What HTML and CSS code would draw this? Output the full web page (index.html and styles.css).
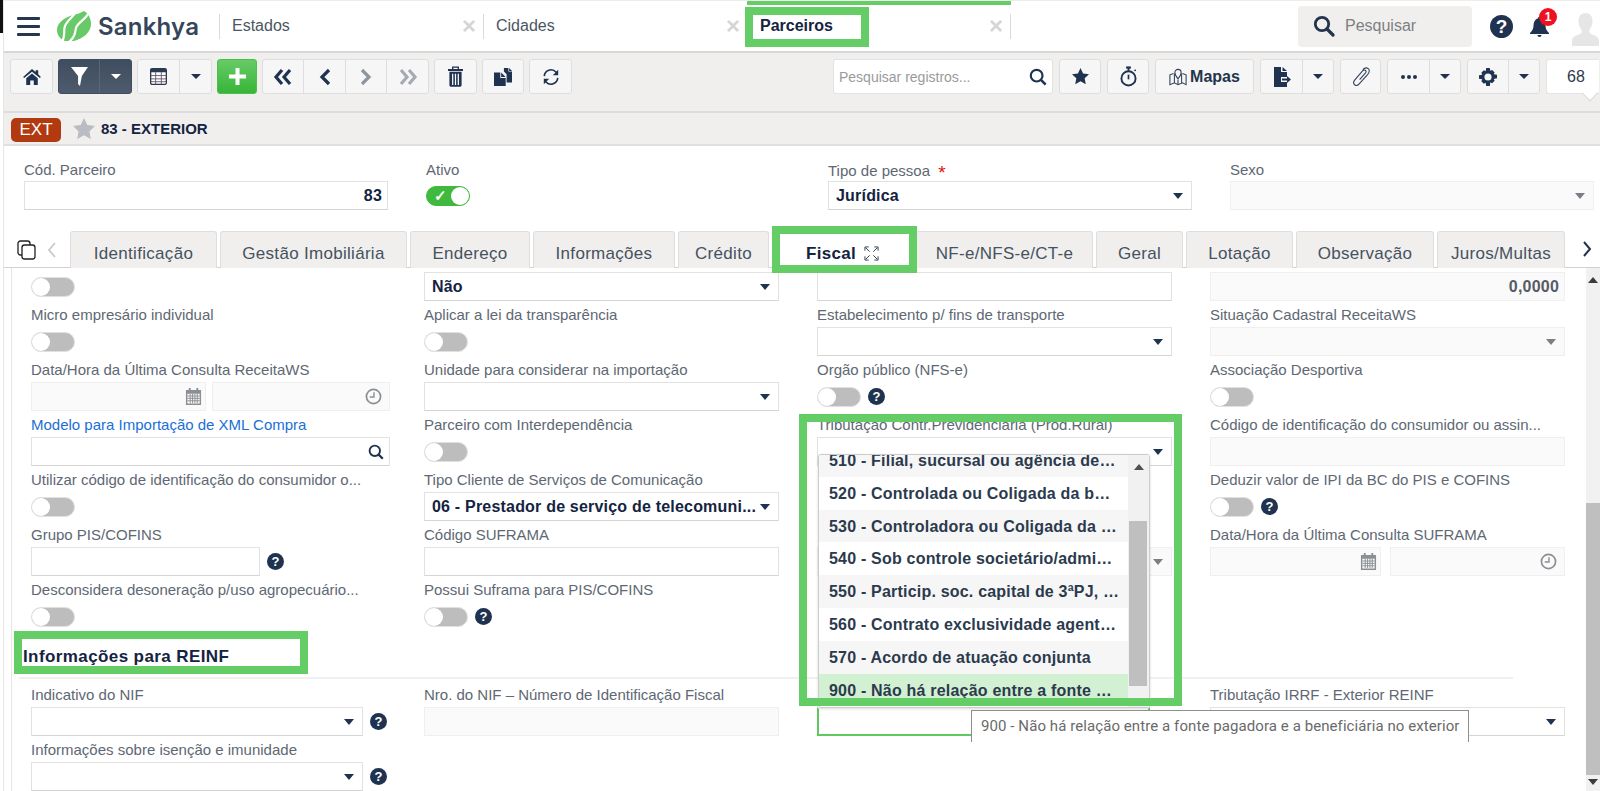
FILE: index.html
```html
<!DOCTYPE html>
<html lang="pt-BR">
<head>
<meta charset="utf-8">
<title>Sankhya - Parceiros</title>
<link rel="stylesheet" href="styles.css">
</head>
<body>
<div class="page">
  <header class="topbar">
    <button class="burger" aria-label="Menu"><i></i><i></i><i></i></button>
    <div class="logo">
      <svg class="logo-mark" viewBox="0 0 35 30" width="35" height="30"><path fill="#68c968" d="M28 0c5 3 7 8 7 13 0 8-7 14-17 17H9C4 28 1 24 1 19 1 11 10 6 17 4c4-1 8-2 11-4z"/><path fill="none" stroke="#fff" stroke-width="2.200" d="M20 1C16 7 11 10 9 15c-2 5 1 9-3 16"/><path fill="none" stroke="#fff" stroke-width="2.200" d="M32 3c-3 6-10 8-12 14-1 5-1 9-7 14"/></svg>
      <span class="logo-text">Sankhya</span>
    </div>
    <div class="tab-top"><div class="tab-in"><span>Estados</span><b class="x">×</b></div></div>
    <div class="tab-top"><div class="tab-in"><span>Cidades</span><b class="x">×</b></div></div>
    <div class="tab-top active"><div class="tab-in"><span>Parceiros</span><b class="x">×</b></div></div>
    <div class="top-right">
      <div class="global-search">
        <svg viewBox="0 0 22 22" width="22" height="22"><circle cx="9" cy="9" r="6.700" fill="none" stroke="#24344d" stroke-width="2.800"/><path d="M14 14l6 6" stroke="#24344d" stroke-width="3.200" stroke-linecap="round"/></svg>
        <span>Pesquisar</span>
      </div>
      <span class="top-help">?</span>
      <div class="bell">
        <svg viewBox="0 0 19 20" width="19" height="20"><path fill="#1f3350" d="M9.500 0c1 0 1.500.5 1.500 1.300C14 2.200 15.500 5 15.500 8.500c0 3 1 5 3.500 7.500v1H0v-1c2.500-2.500 3.500-4.500 3.500-7.500C3.500 5 5 2.200 8 1.300 8 .5 8.500 0 9.500 0zM7.500 18h4c0 1.200-.8 2-2 2s-2-.8-2-2z"/></svg>
        <span class="badge">1</span>
      </div>
      <svg class="avatar" viewBox="0 0 27 33" width="27" height="33"><path fill="#e6e6e6" d="M13.500 0c4.500 0 7 3.500 7 8 0 3.500-1 6.500-3 8.500V20c3 2 9 3 9.500 7v6H0v-6c.5-4 6.500-5 9.500-7v-3.500c-2-2-3-5-3-8.500 0-4.500 2.500-8 7-8z"/></svg>
    </div>
  </header>

  <nav class="toolbar">
    <div class="tool w43"><svg viewBox="0 0 20 18" width="18" height="16"><path fill="#1f3350" d="M10 0l4 3.500V1.500h3V6l3 3-1.200 1.200L10 3 1.200 10.200 0 9zM3.500 10.500L10 5l6.500 5.500V18h-4.500v-5H8v5H3.500z"/></svg></div>
    <div class="tool dark w74"><span class="seg s41"><svg viewBox="0 0 18 20" width="17" height="19"><path fill="#fff" d="M0 0h18l-6.500 9.500L9.500 20 7.500 18V9.500z"/></svg></span><span class="seg grow"><i class="caret white"></i></span></div>
    <div class="tool w75"><span class="seg s42"><svg viewBox="0 0 18 18" width="17" height="17"><rect x=".7" y=".7" width="16.600" height="16.600" rx="1.500" fill="#fff" stroke="#2a3a50" stroke-width="1.400"/><rect x="1" y="1" width="16" height="3.500" fill="#2a3a50"/><path d="M1 8h16M1 11.500h16M1 14.500h16M6 4v13M12 4v13" stroke="#6a5a6a" stroke-width="1"/></svg></span><span class="seg grow"><i class="caret"></i></span></div>
    <div class="tool green w40"><svg viewBox="0 0 20 20" width="19" height="19"><path d="M10 1v18M1 10h18" stroke="#fff" stroke-width="4.200"/></svg></div>
    <div class="tool w167">
      <span class="seg s41"><svg viewBox="0 0 20 18" width="20" height="18"><path d="M9 2L3 9l6 7M17 2l-6 7 6 7" fill="none" stroke="#1f3350" stroke-width="3.200"/></svg></span>
      <span class="seg s42"><svg viewBox="0 0 12 18" width="12" height="18"><path d="M10 2L3 9l7 7" fill="none" stroke="#1f3350" stroke-width="3.200"/></svg></span>
      <span class="seg s41"><svg viewBox="0 0 12 18" width="12" height="18"><path d="M2 2l7 7-7 7" fill="none" stroke="#8d959f" stroke-width="3.200"/></svg></span>
      <span class="seg grow"><svg viewBox="0 0 20 18" width="20" height="18"><path d="M3 2l6 7-6 7M11 2l6 7-6 7" fill="none" stroke="#a5abb3" stroke-width="3.200"/></svg></span>
    </div>
    <div class="tool w43"><svg viewBox="0 0 16 22" width="15" height="21"><path fill="none" stroke="#1f3350" stroke-width="1.400" d="M5 3.500V1h6v2.500"/><path fill="#1f3350" d="M0 3h16v2H0zM1.500 6h13v14c0 1-.8 2-2 2h-9c-1.200 0-2-1-2-2z"/><path stroke="#fff" stroke-width="1.300" d="M5 8v12M8 8v12M11 8v12"/></svg></div>
    <div class="tool w42"><svg viewBox="0 0 20 20" width="18" height="18"><path fill="#1f3350" d="M11 0h5v4h4v12h-6V7l-3-3z"/><path fill="#1f3350" d="M16.800 0L20 3.200h-3.200z"/><path fill="#1f3350" d="M0 5h7v6h6v9H0z"/><path fill="#1f3350" d="M8 5l5 5H8z"/></svg></div>
    <div class="tool w43"><svg viewBox="0 0 20 20" width="18" height="18"><path d="M2.500 9a7.500 7.500 0 0 1 13-4.500l1 1.200M17.500 11a7.500 7.500 0 0 1-13 4.500l-1-1.200" fill="none" stroke="#1f3350" stroke-width="1.800"/><path fill="#1f3350" d="M18 2v6h-6zM2 18v-6h6z"/></svg></div>

    <div class="tool-right">
      <div class="record-search"><span>Pesquisar registros...</span><svg viewBox="0 0 20 20" width="18" height="18"><circle cx="8.500" cy="8.500" r="6.500" fill="none" stroke="#1f3350" stroke-width="2.400"/><path d="M13 13l5.500 5.500" stroke="#1f3350" stroke-width="2.800"/></svg></div>
      <div class="tool w42"><svg viewBox="0 0 20 20" width="17" height="17"><path fill="#1f3350" d="M10 0l3 6.500 7 .9-5.100 4.800L16.200 19 10 15.600 3.800 19l1.300-6.800L0 7.400l7-.9z"/></svg></div>
      <div class="tool w42"><svg viewBox="0 0 18 22" width="17" height="21"><circle cx="9" cy="13" r="7.500" fill="none" stroke="#1f3350" stroke-width="2"/><path d="M9 9v5" stroke="#1f3350" stroke-width="1.800"/><path d="M6.500 1.500h5" stroke="#1f3350" stroke-width="2.400"/><path d="M9 2v3" stroke="#1f3350" stroke-width="2"/><circle cx="16" cy="4.500" r="1" fill="#1f3350"/></svg></div>
      <div class="tool w99 mapas"><svg viewBox="0 0 20 20" width="18" height="18"><path d="M5 6L1 7.500v11l5-2 4 2 5-2 4 2v-11L15 6M6 6.500v10M14 6.500v10M10 13v5.500" fill="none" stroke="#33435a" stroke-width="1.200"/><path d="M10 12C7.500 9 6.500 7.500 6.500 5a3.500 3.500 0 0 1 7 0c0 2.500-1 4-3.500 7z" fill="none" stroke="#33435a" stroke-width="1.200"/></svg><span>Mapas</span></div>
      <div class="tool w74"><span class="seg s42"><svg viewBox="0 0 18 20" width="18" height="20"><path fill="#1f3350" d="M1 0h7v5h6v5H8v5h6v5H1z"/><path fill="#1f3350" d="M9.500 0L14 4H9.500z"/><path fill="#1f3350" d="M9 11.500h5V9l4 3.500-4 3.500v-2.500H9z"/></svg></span><span class="seg grow"><i class="caret"></i></span></div>
      <div class="tool w41"><svg viewBox="0 0 22 22" width="20" height="20"><path d="M9.500 14L16 6.500C17 5.200 16.500 4 15.500 3.500 14.500 3 13.500 3.300 12.500 4.500L4 14.500c-1.500 2-1.300 4 0 5 1.500 1.200 3.500.8 5-1L18.500 8C20.500 5.500 20.500 3 19 1.800 17.300.5 15 .8 13 3" fill="none" stroke="#33435a" stroke-width="1.200"/></svg></div>
      <div class="tool w74"><span class="seg s42"><svg viewBox="0 0 16 4" width="16" height="4"><circle cx="2" cy="2" r="2" fill="#1f3350"/><circle cx="8" cy="2" r="2" fill="#1f3350"/><circle cx="14" cy="2" r="2" fill="#1f3350"/></svg></span><span class="seg grow"><i class="caret"></i></span></div>
      <div class="tool w73"><span class="seg s41"><svg viewBox="0 0 20 20" width="18" height="18"><path fill="#1f3350" d="M8 0h4l.6 3 2-.9 2.800 2.800-1 2 3.600.6v4l-3.600.6 1 2-2.800 2.800-2-1L12 20H8l-.6-3.600-2 1-2.800-2.800 1-2L0 12V8l3.600-.6-1-2 2.800-2.800 2 1z"/><circle cx="10" cy="10" r="4" fill="#f6f6f6"/></svg></span><span class="seg grow"><i class="caret"></i></span></div>
      <div class="count">68</div>
    </div>
  </nav>

  <div class="recordbar">
    <span class="ext">EXT</span>
    <svg class="rec-star" viewBox="0 0 22 22" width="22" height="22"><path fill="#b9bcc2" d="M11 0l3.300 7.100 7.700 1-5.600 5.300 1.400 7.600L11 17.300 4.200 21l1.400-7.600L0 8.100l7.700-1z"/></svg>
    <span class="rec-title">83 - EXTERIOR</span>
  </div>

  <section class="head-form">
    <div class="hf"><label>Cód. Parceiro</label><div class="ctl right strong">83</div></div>
    <div class="hf"><label>Ativo</label><div class="switch on"><span class="check">✓</span><i></i></div></div>
    <div class="hf"><label>Tipo de pessoa <em>*</em></label><div class="ctl sel strong">Jurídica</div></div>
    <div class="hf"><label>Sexo</label><div class="ctl sel off"></div></div>
  </section>

  <div class="tabs">
    <svg class="copy-ic" viewBox="0 0 20 20" width="20" height="20"><rect x="1" y="1" width="12" height="14" rx="2.500" fill="none" stroke="#222" stroke-width="1.300"/><rect x="5" y="5" width="13" height="14" rx="2.500" fill="#fff" stroke="#222" stroke-width="1.300"/></svg>
    <svg class="chev-l" viewBox="0 0 10 18" width="10" height="18"><path d="M8 2L2 9l6 7" fill="none" stroke="#c9c9c9" stroke-width="1.800"/></svg>
    <div class="tab t147">Identificação</div>
    <div class="tab t187">Gestão Imobiliária</div>
    <div class="tab t120">Endereço</div>
    <div class="tab t142">Informações</div>
    <div class="tab t91">Crédito</div>
    <div class="tab t141 current">Fiscal<svg viewBox="0 0 16 16" width="15" height="15"><path d="M1 5V1h4M11 1h4v4M1 11v4h4M15 11v4h-4M2 2l4 4M14 2l-4 4M2 14l4-4M14 14l-4-4" fill="none" stroke="#2a3a50" stroke-width="1"/></svg></div>
    <div class="tab t177">NF-e/NFS-e/CT-e</div>
    <div class="tab t87">Geral</div>
    <div class="tab t107">Lotação</div>
    <div class="tab t138">Observação</div>
    <div class="tab t128">Juros/Multas</div>
    <svg class="chev-r" viewBox="0 0 10 18" width="10" height="18"><path d="M2 2l6 7-6 7" fill="none" stroke="#1f3350" stroke-width="2"/></svg>
  </div>

  <div class="content">
    <main class="pane">
      <div class="grid first">
        <div class="f c1 nolabel"><div class="switch"><i></i></div></div>
        <div class="f nolabel"><div class="ctl sel strong">Não</div></div>
        <div class="f nolabel"><div class="ctl"></div></div>
        <div class="f c4 nolabel"><div class="ctl off right strong grey">0,0000</div></div>

        <div class="f c1"><label>Micro empresário individual</label><div class="switch"><i></i></div></div>
        <div class="f"><label>Aplicar a lei da transparência</label><div class="switch"><i></i></div></div>
        <div class="f"><label>Estabelecimento p/ fins de transporte</label><div class="ctl sel"></div></div>
        <div class="f c4"><label>Situação Cadastral ReceitaWS</label><div class="ctl sel off"></div></div>

        <div class="f c1"><label>Data/Hora da Última Consulta ReceitaWS</label>
          <div class="pair">
            <div class="ctl off ic"><svg viewBox="0 0 18 18" width="17" height="17"><use href="#cal"/></svg></div>
            <div class="ctl off ic"><svg viewBox="0 0 18 18" width="17" height="17"><use href="#clk"/></svg></div>
          </div>
        </div>
        <div class="f"><label>Unidade para considerar na importação</label><div class="ctl sel"></div></div>
        <div class="f"><label>Orgão público (NFS-e)</label><div class="inline"><div class="switch"><i></i></div><span class="help">?</span></div></div>
        <div class="f c4"><label>Associação Desportiva</label><div class="switch"><i></i></div></div>

        <div class="f c1"><label class="link">Modelo para Importação de XML Compra</label><div class="ctl ic"><svg viewBox="0 0 20 20" width="16" height="16"><circle cx="8.500" cy="8.500" r="6.500" fill="none" stroke="#1f3350" stroke-width="2.400"/><path d="M13 13l5.500 5.500" stroke="#1f3350" stroke-width="2.800"/></svg></div></div>
        <div class="f"><label>Parceiro com Interdependência</label><div class="switch"><i></i></div></div>
        <div class="f"><label>Tributação Contr.Previdenciária (Prod.Rural)</label><div class="ctl sel"></div></div>
        <div class="f c4"><label>Código de identificação do consumidor ou assin...</label><div class="ctl off"></div></div>

        <div class="f c1"><label>Utilizar código de identificação do consumidor o...</label><div class="switch"><i></i></div></div>
        <div class="f"><label>Tipo Cliente de Serviços de Comunicação</label><div class="ctl sel strong">06 - Prestador de serviço de telecomuni...</div></div>
        <div class="f"></div>
        <div class="f c4"><label>Deduzir valor de IPI da BC do PIS e COFINS</label><div class="inline"><div class="switch"><i></i></div><span class="help">?</span></div></div>

        <div class="f c1"><label>Grupo PIS/COFINS</label><div class="inline"><div class="ctl narrow"></div><span class="help">?</span></div></div>
        <div class="f"><label>Código SUFRAMA</label><div class="ctl"></div></div>
        <div class="f"><div class="spacer"></div><div class="ctl sel off"></div></div>
        <div class="f c4"><label>Data/Hora da Última Consulta SUFRAMA</label>
          <div class="pair">
            <div class="ctl off ic"><svg viewBox="0 0 18 18" width="17" height="17"><use href="#cal"/></svg></div>
            <div class="ctl off ic"><svg viewBox="0 0 18 18" width="17" height="17"><use href="#clk"/></svg></div>
          </div>
        </div>

        <div class="f c1"><label>Desconsidera desoneração p/uso agropecuário...</label><div class="switch"><i></i></div></div>
        <div class="f"><label>Possui Suframa para PIS/COFINS</label><div class="inline"><div class="switch"><i></i></div><span class="help">?</span></div></div>
      </div>

      <h2 class="section">Informações para REINF</h2>

      <div class="grid">
        <div class="f c1"><label>Indicativo do NIF</label><div class="inline"><div class="ctl sel mid"></div><span class="help">?</span></div></div>
        <div class="f"><label>Nro. do NIF – Número de Identificação Fiscal</label><div class="ctl off"></div></div>
        <div class="f"><div class="spacer"></div><div class="ctl focus"></div></div>
        <div class="f c4"><label>Tributação IRRF - Exterior REINF</label><div class="ctl sel"></div></div>
        <div class="f c1"><label>Informações sobre isenção e imunidade</label><div class="inline"><div class="ctl sel mid"></div><span class="help">?</span></div></div>
      </div>
    </main>
    <aside class="scroll">
      <i class="arrow up"></i>
      <div class="track"><div class="thumb"></div></div>
      <i class="arrow down"></i>
    </aside>
  </div>

  <ul class="dropdown">
    <li class="clipped">510 - Filial, sucursal ou agência de…</li>
    <li>520 - Controlada ou Coligada da b…</li>
    <li>530 - Controladora ou Coligada da …</li>
    <li>540 - Sob controle societário/admi…</li>
    <li>550 - Particip. soc. capital de 3ªPJ, …</li>
    <li>560 - Contrato exclusividade agent…</li>
    <li>570 - Acordo de atuação conjunta</li>
    <li class="picked">900 - Não há relação entre a fonte …</li>
  </ul>
  <div class="dd-scroll"><i class="arrow up"></i><div class="dd-track"><div class="dd-thumb"></div></div><i class="arrow down soft"></i></div>
  <div class="tooltip">900 - Não há relação entre a fonte pagadora e a beneficiária no exterior</div>

  <div class="mark m-parceiros"></div>
  <div class="mark m-fiscal"></div>
  <div class="mark m-reinf"></div>
  <div class="mark m-drop"></div>
  <div class="edge"></div>

  <svg class="defs" width="0" height="0">
    <defs>
      <g id="cal"><path fill="#8b8f94" d="M1 2h3V0h2v2h6V0h2v2h3v16H1zM2.500 6v10.500h13V6z"/><path stroke="#8b8f94" stroke-width="1" d="M2.500 8.500h13M2.500 11h13M2.500 13.500h13M5.500 6v10M8 6v10M10.500 6v10M13 6v10"/></g>
      <g id="clk"><circle cx="9" cy="9" r="7.500" fill="none" stroke="#8b8f94" stroke-width="1.800"/><path d="M9.500 4.500v5H5" fill="none" stroke="#8b8f94" stroke-width="1.500"/></g>
    </defs>
  </svg>
</div>
</body>
</html>
```

FILE: styles.css
```css
* { box-sizing: border-box; }
html, body { margin: 0; padding: 0; height: 100%; }
body { font-family: "Liberation Sans", Arial, sans-serif; font-size: 15px; color: #5e6873; background: #fff; overflow: hidden; }
.page { position: relative; width: 1600px; height: 791px; overflow: hidden; background: #fff; }
.defs { position: absolute; }

/* top bar */
.topbar { display: flex; align-items: stretch; height: 53px; border-top: 1px solid #ececec; border-bottom: 2px solid #d6d6d6; background: #fff; }
.burger { width: 23px; margin: 0 0 0 17px; padding: 0; border: 0; background: none; display: flex; flex-direction: column; justify-content: center; gap: 5px; }
.burger i { display: block; height: 3px; background: #26364c; border-radius: 1px; }
.logo { width: 179px; display: flex; align-items: center; padding-left: 16px; }
.logo-mark { flex: none; }
.logo-text { font-family: "Inter", sans-serif; font-weight: 600; font-size: 24px; letter-spacing: .2px; color: #35455a; margin-left: 7px; }
.tab-top { width: 264px; display: flex; align-items: center; }
.tab-top .tab-in { flex: 1; height: 25px; border-left: 1px solid #d5dade; padding: 0 7px 0 12px; display: flex; align-items: center; justify-content: space-between; font-size: 16px; color: #4a5662; }
.tab-top .x { font-size: 24px; font-weight: 700; color: #d6d6d6; line-height: 1; }
.tab-top.active { box-shadow: inset 0 4px 0 #65cd66; }
.tab-top.active .tab-in { border-left: 0; border-right: 1px solid #d5dade; padding-left: 13px; font-weight: 700; color: #14233f; }
.top-right { display: flex; align-items: center; margin-left: 287px; }
.global-search { width: 174px; height: 41px; background: #f0efee; border-radius: 4px; display: flex; align-items: center; gap: 10px; padding-left: 15px; font-size: 16px; color: #7d7f82; }
.top-help { flex: none; width: 23px; height: 23px; margin-left: 18px; border-radius: 50%; background: #1f3350; color: #fff; font-size: 19px; font-weight: 700; line-height: 23px; text-align: center; }
.bell { position: relative; width: 19px; height: 20px; margin-left: 17px; margin-top: 2px; }
.bell svg { display: block; }
.badge { position: absolute; left: 9px; top: -9px; width: 18px; height: 18px; border-radius: 50%; background: #ee1122; color: #fff; font-size: 12px; font-weight: 700; line-height: 18px; text-align: center; }
.avatar { margin-left: 23px; margin-top: 6px; flex: none; }

/* toolbar */
.toolbar { display: flex; align-items: flex-start; gap: 5px; height: 60px; padding: 6px 0 0 10px; background: #f0efee; border-bottom: 2px solid #dcdcdc; }
.tool { height: 35px; display: flex; align-items: center; justify-content: center; background: #f6f6f6; border: 1px solid #dedede; border-radius: 3px; flex: none; }
.w40 { width: 40px; } .w41 { width: 41px; } .w42 { width: 42px; } .w43 { width: 43px; } .w73 { width: 73px; } .w74 { width: 74px; } .w75 { width: 75px; } .w99 { width: 99px; } .w167 { width: 167px; }
.tool.dark { background: linear-gradient(#3f4d60, #4e5b6c); border-color: #3f4d60; }
.tool.green { background: linear-gradient(#66cb66, #38b538); border-color: #4dbf4d; }
.seg { height: 100%; display: flex; align-items: center; justify-content: center; border-right: 1px solid #dedede; flex: none; }
.seg.grow { flex: 1; border-right: 0; }
.s41 { width: 41px; } .s42 { width: 42px; }
.dark .seg { border-color: #5b6777; }
.caret { display: block; width: 0; height: 0; border-left: 5px solid transparent; border-right: 5px solid transparent; border-top: 5px solid #1f3350; }
.caret.white { border-top-color: #fff; }
.tool-right { display: flex; gap: 6px; margin-left: 256px; }
.record-search { width: 220px; height: 35px; background: #fff; border: 1px solid #e2e2e2; border-radius: 3px; display: flex; align-items: center; justify-content: space-between; padding: 0 5px; font-size: 14px; color: #9a9a9a; }
.mapas { gap: 3px; font-size: 16px; font-weight: 700; color: #24344d; }
.count { position: relative; width: 53px; height: 35px; background: #fff; border-radius: 3px 0 0 3px; border: 1px solid #e4e4e4; border-right: 0; font-size: 16px; color: #2d3a4c; display: flex; align-items: center; padding-left: 20px; }
.count::after { content: ""; position: absolute; right: 3px; bottom: -6px; width: 11px; height: 11px; background: #fff; border-right: 1px solid #d8d8d8; border-bottom: 1px solid #d8d8d8; transform: rotate(45deg); }

/* record bar */
.recordbar { height: 33px; background: #f0efee; border-bottom: 2px solid #e0e0e0; display: flex; align-items: center; padding-left: 11px; }
.ext { width: 50px; height: 24px; background: #b23a10; border-radius: 5px; color: #fff; font-size: 17px; line-height: 24px; text-align: center; margin-top: 2px; }
.rec-star { margin-left: 12px; }
.rec-title { margin-left: 6px; font-size: 15px; font-weight: 700; color: #14233f; }

/* header form */
.head-form { display: grid; grid-template-columns: repeat(4, 402px); padding: 14px 0 0 24px; height: 85px; }
.hf { width: 364px; }
.hf label { display: block; height: 21px; line-height: 19px; }
.hf label em { color: #e01010; font-style: normal; font-size: 19px; margin-left: 4px; position: relative; top: 3px; }

/* controls */
.ctl { position: relative; height: 29px; line-height: 27px; border: 1px solid #e2e2e2; border-bottom-color: #d5d5d5; background: #fff; padding: 0 7px; font-size: 16px; color: #14233f; letter-spacing: .2px; white-space: nowrap; }
.ctl.right { text-align: right; padding-right: 5px; }
.ctl.strong { font-weight: 700; }
.ctl.grey { color: #555c66; }
.ctl.off { background: #fafafa; border-color: #efefef; }
.ctl.sel::after { content: ""; position: absolute; right: 8px; top: 11px; border-left: 5.500px solid transparent; border-right: 5.500px solid transparent; border-top: 6px solid #1f3350; }
.ctl.sel.off::after { border-top-color: #7a7f86; }
.ctl.focus { width: 333px; border: 2px solid #5fc85f; border-top-color: transparent; }
.ctl.ic { display: flex; align-items: center; justify-content: flex-end; padding-right: 5px; flex: 1; }
.pair .ctl.ic:first-child { padding-right: 3px; }
.pair .ctl.ic:last-child { padding-right: 7px; }
.ctl.narrow { width: 229px; }
.ctl.mid { width: 332px; }
.switch { position: relative; width: 44px; height: 20px; margin-top: 5px; background: #bdbdbd; border: 1px solid #e0e0e0; border-radius: 10px; }
.switch i { position: absolute; left: 0; top: 0; width: 18px; height: 18px; background: #fff; border-radius: 50%; }
.switch.on { background: #3fb93f; border-color: #3fb93f; }
.switch.on i { left: 24px; }
.switch .check { position: absolute; left: 7px; top: -1px; color: #fff; font-size: 15px; font-weight: 700; line-height: 20px; }
.inline { display: flex; align-items: flex-start; gap: 7px; }
.inline .help { margin-top: 6px; }
.help { flex: none; display: block; width: 17px; height: 17px; border-radius: 50%; background: #1f3350; color: #fff; font-size: 13px; font-weight: 700; line-height: 17px; text-align: center; }
.pair { display: flex; gap: 6px; }
.c4 .pair { gap: 9px; }

/* tabs */
.tabs { display: flex; align-items: flex-start; height: 37px; padding-left: 17px; gap: 3px; border-bottom: 1px solid #d4d0d0; }
.copy-ic { margin-top: 9px; flex: none; }
.chev-l { margin: 10px 10px 0 7px; flex: none; }
.tab { height: 37px; flex: none; background: #f0efee; border: 1px solid #dedede; border-bottom: 0; border-radius: 3px 3px 0 0; font-size: 17px; letter-spacing: .3px; color: #46525e; text-align: center; line-height: 43px; }
.tab.current { background: #fff; font-weight: 700; color: #14233f; }
.tab.current svg { margin-left: 8px; vertical-align: -2px; }
.t87 { width: 87px; } .t91 { width: 91px; } .t107 { width: 107px; } .t120 { width: 120px; } .t128 { width: 128px; overflow: hidden; white-space: nowrap; } .t138 { width: 138px; } .t141 { width: 141px; } .t142 { width: 142px; } .t147 { width: 147px; } .t177 { width: 177px; } .t187 { width: 187px; }
.chev-r { margin: 9px 0 0 14px; flex: none; }

/* content */
.content { display: flex; height: 523px; margin-left: 11px; }
.pane { flex: 1; overflow: hidden; border-left: 1px solid #e6e6e6; padding-left: 19px; }
.grid { display: grid; grid-template-columns: 393px 393px 393px 355px; grid-auto-rows: 55px; }
.grid.first { margin-top: -22px; }
.grid.first .nolabel { padding-top: 26px; }
.f { padding-right: 38px; }
.f.c1 { padding-right: 34px; }
.f.c4 { padding-right: 0; }
.f label { display: block; height: 26px; line-height: 28px; white-space: nowrap; }
.f .spacer { height: 26px; }
.f label.link { color: #1a6fd6; }
.section { margin: 0 0 2px -12px; width: 1494px; height: 48px; padding: 13px 0 0 4px; border-bottom: 2px solid #f0f0f0; font-size: 17px; letter-spacing: .4px; font-weight: 700; line-height: 26px; color: #14233f; }

/* scrollbar */
.scroll { width: 14px; background: #f1f1f1; display: flex; flex-direction: column; align-items: center; }
.arrow { display: block; width: 0; height: 0; border-left: 5px solid transparent; border-right: 5px solid transparent; flex: none; }
.arrow.up { border-bottom: 6px solid #3c3c3c; }
.arrow.down { border-top: 6px solid #3c3c3c; }
.scroll .arrow.up { margin-top: 9px; }
.scroll .arrow.down { margin-bottom: 6px; }
.track { flex: 1; width: 100%; position: relative; }
.thumb { position: absolute; left: 0; right: 0; top: 220px; bottom: 4px; background: #bfbfbf; }

/* dropdown overlay */
.dropdown { position: absolute; left: 818px; top: 454px; width: 332px; height: 254px; margin: 0; padding: 0 21px 0 0; list-style: none; overflow: hidden; background: #fff; border: 1px solid #ccc; border-radius: 3px; box-shadow: 0 1px 3px rgba(0,0,0,.15); font-size: 16px; letter-spacing: .2px; font-weight: 700; color: #2b3a4d; }
.dropdown li { height: 32.800px; line-height: 33px; padding-left: 10px; white-space: nowrap; overflow: hidden; }
.dropdown li:nth-child(odd) { background: #f6f6f6; }
.dropdown li.clipped { margin-top: -11px; }
.dropdown li.picked { background: #d2f0d2; }
.dd-scroll { position: absolute; left: 1128px; top: 455px; width: 21px; height: 252px; background: #f1f1f1; display: flex; flex-direction: column; align-items: center; }
.dd-scroll .arrow.up { margin-top: 9px; border-bottom-color: #505050; }
.dd-scroll .arrow.soft { border-top-color: #a8a8a8; margin-bottom: 2px; }
.dd-track { flex: 1; width: 100%; position: relative; }
.dd-thumb { position: absolute; left: 1px; right: 2px; top: 51px; bottom: 13px; background: #bfbfbf; }
.tooltip { position: absolute; left: 971px; top: 710px; width: 498px; height: 32px; background: #fff; border: 1px solid #8e8e8e; border-bottom: 0; font-family: "Roboto", sans-serif; font-size: 15px; letter-spacing: .08px; color: #6a6a6a; line-height: 31px; padding-left: 9px; white-space: nowrap; }

/* highlight marks */
.mark { position: absolute; border: 8px solid #65cd66; }
.m-parceiros { left: 745px; top: 7px; width: 124px; height: 40px; }
.m-fiscal { left: 772px; top: 226px; width: 145px; height: 47px; }
.m-reinf { left: 14px; top: 631px; width: 294px; height: 43px; }
.m-drop { left: 799px; top: 414px; width: 383px; height: 292px; }
.edge { position: absolute; left: 0; top: 0; width: 4px; height: 100%; background: linear-gradient(#111 0, #111 33px, #fff 33px); border-right: 1px solid #e6e6e6; }
```
